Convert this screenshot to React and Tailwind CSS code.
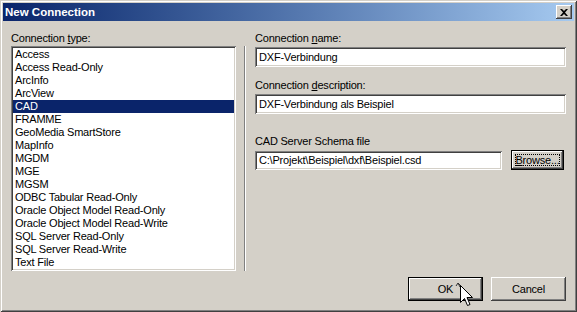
const types = [
  "Access",
  "Access Read-Only",
  "ArcInfo",
  "ArcView",
  "CAD",
  "FRAMME",
  "GeoMedia SmartStore",
  "MapInfo",
  "MGDM",
  "MGE",
  "MGSM",
  "ODBC Tabular Read-Only",
  "Oracle Object Model Read-Only",
  "Oracle Object Model Read-Write",
  "SQL Server Read-Only",
  "SQL Server Read-Write",
  "Text File",
];

const sunken =
  "bg-white shadow-[inset_1px_1px_0_#808080,inset_-1px_-1px_0_#ffffff,inset_2px_2px_0_#404040,inset_-2px_-2px_0_#d4d0c8]";
const raised =
  "bg-[#d4d0c8] shadow-[inset_-1px_-1px_0_#404040,inset_1px_1px_0_#ffffff,inset_-2px_-2px_0_#808080,inset_2px_2px_0_#d4d0c8]";

function Label({ pre, key_, post }) {
  return (
    <div className="h-[13px] leading-[13px] text-black">
      {pre}
      <span className="underline underline-offset-[1px]">{key_}</span>
      {post}
    </div>
  );
}

function Field({ value, className = "" }) {
  return (
    <div className={`${sunken} h-[20px] px-[4px] leading-[20px] text-black whitespace-nowrap ${className}`}>
      {value}
    </div>
  );
}

function Cursor() {
  return (
    <svg
      className="absolute left-[455px] top-[281px]"
      width="20"
      height="30"
      viewBox="0 0 20 30"
    >
      <path d="M3 2 L6 5 M1 5 L3 2 L5 6" stroke="#303030" strokeWidth="1" fill="none" />
      <path
        d="M5.5 4.5 L5.5 21.5 L9.5 17.5 L12.5 24.5 L15 23.5 L12 16.5 L17.5 16.5 Z"
        fill="#ffffff"
        stroke="#000000"
        strokeWidth="1"
      />
    </svg>
  );
}

export default function App() {
  return (
    <div className="relative w-[577px] h-[312px] bg-[#d4d0c8] p-[3px] flex flex-col font-['Liberation_Sans',Arial,sans-serif] text-[11px] tracking-[-0.2px] shadow-[inset_1px_1px_0_#d4d0c8,inset_-1px_-1px_0_#404040,inset_2px_2px_0_#ffffff,inset_-2px_-2px_0_#808080]">
      {/* title bar */}
      <div className="h-[18px] flex items-center justify-between pl-[2px] pr-[2px] bg-gradient-to-r from-[#0a246a] to-[#a6caf0]">
        <span className="text-white font-bold text-[11.5px] tracking-normal leading-[18px]">New Connection</span>
        <div className={`${raised} w-[16px] h-[14px] flex items-center justify-center`}>
          <svg width="8" height="7" viewBox="0 0 8 7">
            <path d="M0 0h2l2 2 2-2h2L5 3.5 8 7H6L4 5 2 7H0l3-3.5z" fill="#000" />
          </svg>
        </div>
      </div>

      <div className="flex-1 flex flex-col pt-[11px] px-[8px]">
        <div className="flex items-start">
          {/* left column */}
          <div className="w-[225px] flex flex-col">
            <Label pre="Connection " key_="t" post="ype:" />
            <div className={`${sunken} mt-[1px] h-[225px] p-[2px]`}>
              {types.map((t) => (
                <div
                  key={t}
                  className={`h-[13px] leading-[13px] pl-[2px] whitespace-nowrap ${
                    t === "CAD" ? "bg-[#0a246a] text-white" : "text-black"
                  }`}
                >
                  {t}
                </div>
              ))}
            </div>
          </div>

          {/* separator */}
          <div className="ml-[8px] mt-[14px] w-[2px] h-[225px] border-l border-[#808080] border-r border-r-white" />

          {/* right column */}
          <div className="ml-[9px] w-[311px] flex flex-col">
            <Label pre="Connection " key_="n" post="ame:" />
            <Field className="mt-[2px]" value="DXF-Verbindung" />
            <div className="mt-[12px]">
              <Label pre="Connection " key_="d" post="escription:" />
            </div>
            <Field className="mt-[2px]" value="DXF-Verbindung als Beispiel" />
            <div className="mt-[21px] h-[13px] leading-[13px] text-black">CAD Server Schema file</div>
            <div className="mt-[2px] flex items-center">
              <Field className="w-[247px] !h-[19px] !leading-[19px]" value="C:\Projekt\Beispiel\dxf\Beispiel.csd" />
              <div className="ml-[9px] w-[53px] h-[20px] border border-black">
                <div className={`${raised} w-full h-full p-[3px]`}>
                  <div className="w-full h-full border border-dotted border-black flex items-center justify-center leading-[11px] text-black">
                    <span className="underline underline-offset-[1px]">B</span>rowse...
                  </div>
                </div>
              </div>
            </div>
          </div>
        </div>

        {/* buttons */}
        <div className="mt-[6px] flex justify-end gap-[8px]">
          <div className="w-[75px] h-[24px] border border-black">
            <div className={`${raised} w-full h-full flex items-center justify-center text-black`}>OK</div>
          </div>
          <div className={`${raised} w-[75px] h-[24px] flex items-center justify-center text-black`}>Cancel</div>
        </div>
      </div>

      <Cursor />
    </div>
  );
}
